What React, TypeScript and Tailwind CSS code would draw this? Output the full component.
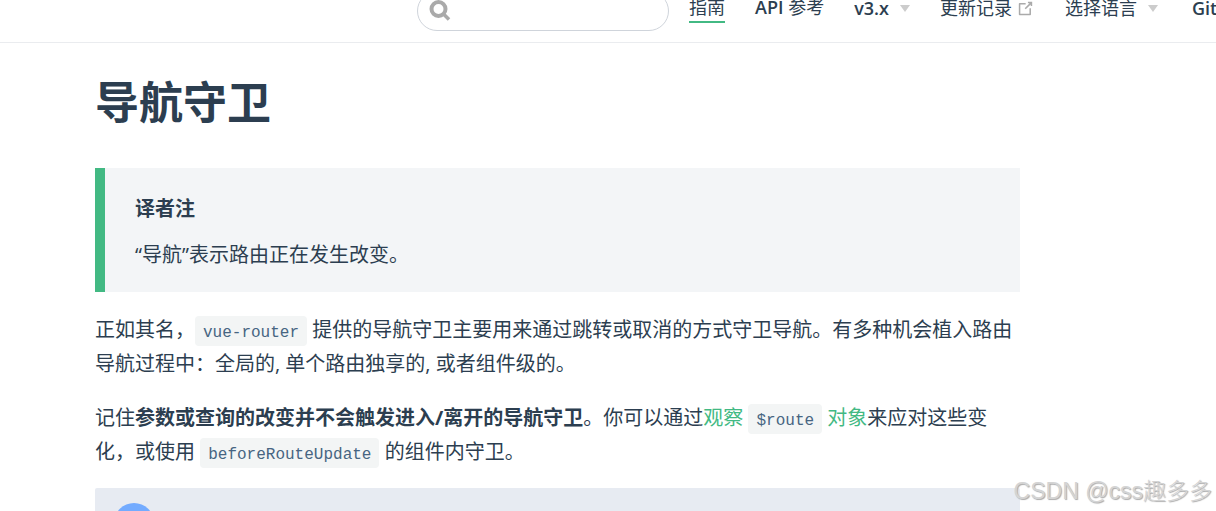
import type { ReactNode } from "react";

const navItemClass = "flex h-[30px] items-center whitespace-nowrap";
const navLinkClass = "block h-[29px] border-b-2 leading-[27px] whitespace-nowrap";

const Arrow = () => (
  <span className="ml-[11px] h-0 w-0 border-x-[5px] border-t-[7px] border-x-transparent border-t-[#cccccc]" />
);

const OutboundIcon = () => (
  <svg className="ml-1 h-[19px] w-[19px] text-[#aaaaaa]" viewBox="0 0 100 100" aria-hidden="true">
    <path
      fill="currentColor"
      d="M18.8,85.1h56l0,0c2.2,0,4-1.8,4-4v-32h-8v28h-48v-48h28v-8h-32l0,0c-2.2,0-4,1.8-4,4v56C14.8,83.3,16.6,85.1,18.8,85.1z"
    />
    <polygon
      fill="currentColor"
      points="45.7,48.7 51.3,54.3 77.2,28.5 77.2,37.2 85.2,37.2 85.2,14.9 62.8,14.9 62.8,22.9 71.5,22.9"
    />
  </svg>
);

const Code = ({ children }: { children: ReactNode }) => (
  <code className="rounded bg-[#f3f5f5] px-2 pt-2 pb-1 font-['Liberation_Mono',monospace] text-base text-[#476582]">
    {children}
  </code>
);

const Navbar = () => {
  return (
    <header className="flex h-[43px] items-end gap-5 overflow-hidden border-b border-[#eaecef] pl-[417px]">
      <label className="relative mb-[11px] block shrink-0">
        <svg
          className="absolute bottom-[9px] left-3 h-[22px] w-[22px]"
          viewBox="0 0 22 22"
          fill="none"
          stroke="#aaaaaa"
          aria-hidden="true"
        >
          <circle cx="9.5" cy="9" r="7" strokeWidth="4" />
          <path d="M14 13.5l6 6" strokeWidth="3.6" />
        </svg>
        <input
          type="search"
          aria-label="搜索"
          className="h-10 w-[252px] rounded-full border border-[#cfd4db] pr-3 pl-10 text-lg outline-none"
        />
      </label>
      <nav className="mb-[19px] flex shrink-0 items-end gap-[30px] text-lg">
        <a href="#guide" className={`${navLinkClass} border-[#42b983]`}>
          指南
        </a>
        <a href="#api" className={`${navLinkClass} border-transparent`}>
          <span className="font-semibold">API</span> 参考
        </a>
        <button type="button" className={`${navItemClass} font-semibold`}>
          v3.x
          <Arrow />
        </button>
        <a href="#changelog" className={navItemClass}>
          更新记录
          <OutboundIcon />
        </a>
        <button type="button" className={navItemClass}>
          选择语言
          <Arrow />
        </button>
        <a href="#github" className={`${navItemClass} ml-1 font-semibold`}>
          GitHub
        </a>
      </nav>
    </header>
  );
};

const App = () => {
  return (
    <div className="relative h-screen overflow-hidden bg-white font-['Open_Sans','Noto_Sans_CJK_SC',sans-serif] text-[#2c3e50]">
      <Navbar />
      <main lang="zh-CN" className="ml-[95px] max-w-[925px] pt-8 text-xl leading-[34px]">
        <h1 className="text-[44px] leading-[54px] font-bold">导航守卫</h1>

        <div className="mt-[39px] border-l-[10px] border-[#42b983] bg-[#f3f5f7] px-[30px] pt-6 pb-5">
          <p className="font-bold">译者注</p>
          <p className="mt-3">“导航”表示路由正在发生改变。</p>
        </div>

        <p className="mt-[21px]">
          正如其名，<Code>vue-router</Code> 提供的导航守卫主要用来通过跳转或取消的方式守卫导航。有多种机会植入路由导航过程中：全局的, 单个路由独享的, 或者组件级的。
        </p>

        <p className="mt-5">
          记住<strong>参数或查询的改变并不会触发进入/离开的导航守卫</strong>。你可以通过
          <a href="#route" className="text-[#42b983]">
            观察 <Code>$route</Code> 对象
          </a>
          来应对这些变化，或使用 <Code>beforeRouteUpdate</Code> 的组件内守卫。
        </p>

        <div className="mt-[19px] h-20 rounded-xs bg-[#e7ebf2] px-[19px] py-[15px]">
          <div className="h-10 w-10 rounded-full bg-[#73abff]" />
        </div>
      </main>

      <div className="absolute right-1 bottom-1 font-['Liberation_Sans','Noto_Sans_CJK_SC',sans-serif] text-[23px] leading-8 font-light text-[#d4d4d4] [text-shadow:1px_1px_1px_#aaaaaa]">
        CSDN @css趣多多
      </div>
    </div>
  );
};

export default App;
